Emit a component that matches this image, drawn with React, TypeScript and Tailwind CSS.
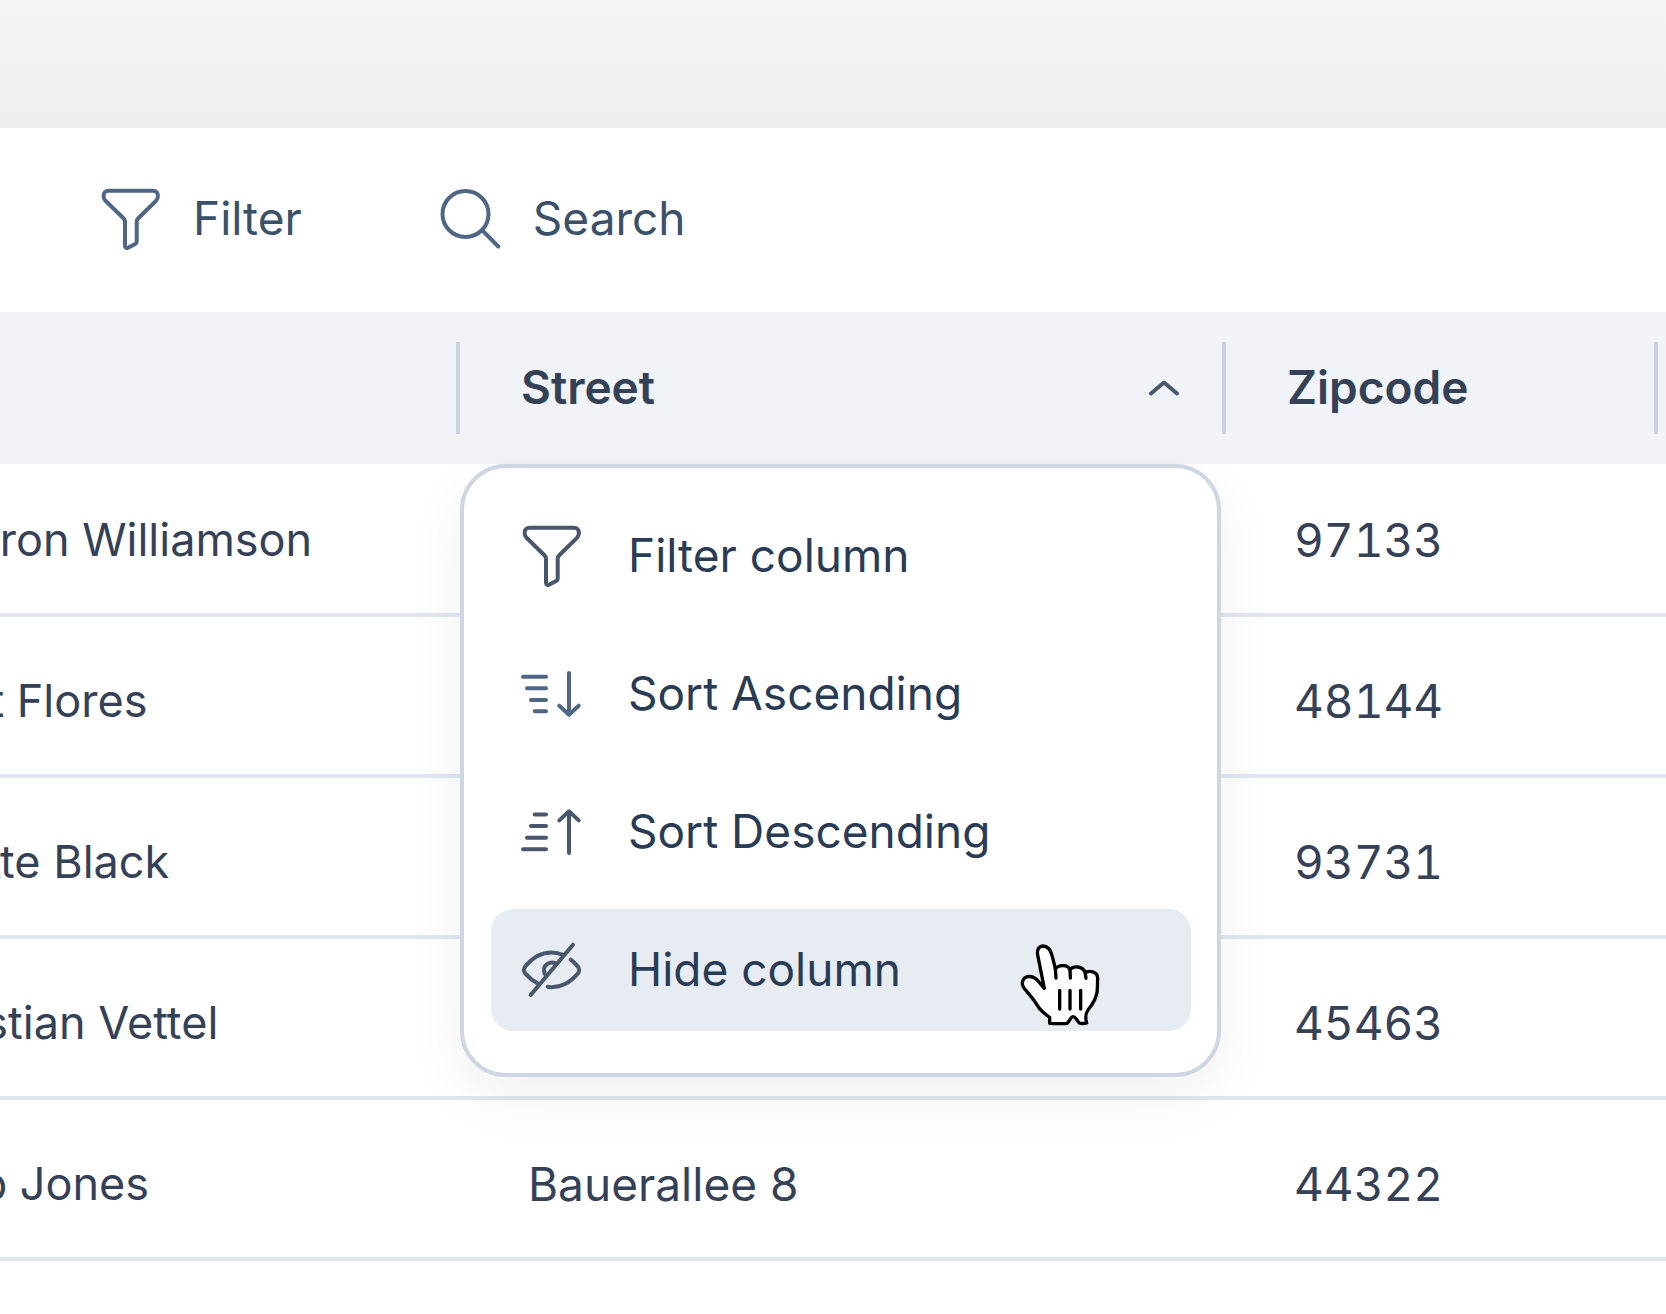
import type { ReactNode } from "react";

type IconProps = { className?: string };

function Icon({ className = "", children }: { className?: string; children: ReactNode }) {
  return (
    <svg
      aria-hidden="true"
      viewBox="0 0 64 64"
      fill="none"
      stroke="currentColor"
      strokeWidth="4"
      strokeLinecap="round"
      strokeLinejoin="round"
      className={`size-16 shrink-0 ${className}`}
    >
      {children}
    </svg>
  );
}

function FunnelIcon({ className }: IconProps) {
  return (
    <Icon className={className}>
      <path d="M9.5 3.7H54C57 3.7 58.9 6 58.9 8.7C58.9 10.8 58.4 12.4 57 13.8L39.5 31C38.2 32.2 37.7 33 37.7 34.6V54.4C37.7 55.8 37.3 56.4 36.2 57L29 60.7C27.3 61.5 26 60.8 26 59.1V34.6C26 33 25.5 32.2 24.2 31L6.5 13.8C5 12.4 4.6 10.8 4.6 8.7C4.6 6 6.6 3.7 9.5 3.7Z" />
    </Icon>
  );
}

function SearchIcon({ className }: IconProps) {
  return (
    <Icon className={className}>
      <circle cx="26.5" cy="27" r="23" />
      <path d="M43.5 43.5L59.3 59.5" />
    </Icon>
  );
}

function SortAscendingIcon({ className }: IconProps) {
  return (
    <Icon className={className}>
      <path d="M3 14.7H26M7 26.3H26M11 38H26M14.7 49.3H26M49 11V52.5M39.3 43.7L49 52.7L58.7 43.7" />
    </Icon>
  );
}

function SortDescendingIcon({ className }: IconProps) {
  return (
    <Icon className={className}>
      <path d="M14.7 14.5H26M11 26H26M7 37.7H26M3 49.3H26M49 53V11.5M39.3 20.4L49 11.3L58.7 20.4" />
    </Icon>
  );
}

function EyeOffIcon({ className }: IconProps) {
  return (
    <Icon className={className}>
      <path d="M43.3 17C39.5 15.3 35.5 14.5 31.3 14.5C20.8 14.5 11.8 20.6 5.4 28.2C3.6 30.4 3.6 33.4 5.4 35.6C9 39.8 13.4 43.2 18.3 45.7" />
      <path d="M50.7 21.7C53.2 23.6 55.6 25.9 57.7 28.4C59.6 30.6 59.6 33.6 57.7 35.8C51.3 43.4 42.5 49.2 31.5 49.2C30.2 49.2 28.9 49 27.7 48.7" />
      <path d="M10.7 57L53 6.7" />
      <path d="M36.3 25.6C29.5 22.6 23.6 27 24 32.5C24.1 34.8 24.8 36.6 26 38" />
    </Icon>
  );
}

function ChevronUpIcon() {
  return (
    <svg
      aria-hidden="true"
      viewBox="0 0 32 18"
      fill="none"
      stroke="currentColor"
      strokeWidth="4"
      strokeLinecap="round"
      strokeLinejoin="round"
      className="h-[18px] w-8"
    >
      <path d="M3 14.5L16 3.5L29 14.5" />
    </svg>
  );
}

function HandCursor() {
  return (
    <svg
      aria-hidden="true"
      viewBox="114 126 252 252"
      fill="none"
      stroke="#000"
      strokeWidth="10"
      strokeLinecap="round"
      strokeLinejoin="round"
      className="pointer-events-none absolute top-[33px] right-[89px] size-[84px]"
    >
      <path
        fill="#fff"
        d="M193 265L174 170C169 150 176 138 190 138C205 139 213 152 217 170C221 185 224 196 226 207C233 196 263 190 270 210C278 197 309 196 316 219C325 211 353 212 353 235C352 252 353 266 351 277C347 299 339 311 326 327C318 338 316 344 318 360L320 369C312 371 304 371 298 369C290 362 288 350 279 350C271 350 270 363 261 370C245 372 225 371 209 370L209 352C190 338 182 333 172 316C158 292 146 282 132 264C122 250 128 233 143 230C168 226 178 250 193 265Z"
      />
      <path d="M226 205L228 234M270 208L271 234M315 215L318 235M239 271V327M270 271V327M302 271V327" />
    </svg>
  );
}

const rows = [
  { name: "Cameron Williamson", street: "", zip: "97133" },
  { name: "Albert Flores", street: "", zip: "48144" },
  { name: "Annette Black", street: "", zip: "93731" },
  { name: "Sebastian Vettel", street: "", zip: "45463" },
  { name: "Jacob Jones", street: "Bauerallee 8", zip: "44322" },
];

const itemClass =
  "relative flex h-[122px] w-full items-center gap-11 rounded-[22px] pl-[29px] text-left text-[#2a3c55]";

function ColumnMenu() {
  return (
    <div
      role="menu"
      aria-label="Street column"
      className="absolute top-full right-px left-1 z-10 flex flex-col gap-4 rounded-[46px] border-4 border-[#cdd6e1] bg-white pt-[27px] pr-[26px] pb-[42px] pl-[27px] font-normal shadow-[0_20px_60px_rgba(0,0,0,0.06)]"
    >
      <button type="button" role="menuitem" className={itemClass}>
        <FunnelIcon className="text-[#4a566b]" />
        <span className="pb-[2px]">Filter column</span>
      </button>
      <button type="button" role="menuitem" className={itemClass}>
        <SortAscendingIcon className="text-[#4f6784]" />
        <span className="pb-[2px]">Sort Ascending</span>
      </button>
      <button type="button" role="menuitem" className={itemClass}>
        <SortDescendingIcon className="text-[#4a566b]" />
        <span className="pb-[2px]">Sort Descending</span>
      </button>
      <button type="button" role="menuitem" className={`${itemClass} bg-[#e7ecf3]`}>
        <EyeOffIcon className="text-[#4a566b]" />
        <span className="pb-[2px]">Hide column</span>
        <HandCursor />
      </button>
    </div>
  );
}

export default function App() {
  return (
    <div className="flex min-h-screen flex-col overflow-hidden bg-white font-['Inter',sans-serif] text-[46px] leading-[56px] text-[#354157]">
      <header className="h-32 bg-linear-to-b from-[#f3f4f8] to-[#eeeff3]" />
      <div className="flex h-[184px] items-center gap-[137px] pb-[2px] pl-[99px] text-[#3b5069]">
        <button type="button" className="flex items-center gap-[30px]">
          <FunnelIcon className="text-[#4f6784]" />
          <span className="pb-[2px]">Filter</span>
        </button>
        <button type="button" className="flex items-center gap-[30px]">
          <SearchIcon className="text-[#4f6784]" />
          <span className="pb-[2px]">Search</span>
        </button>
      </div>
      <div className="-ml-[160px]">
        <table className="w-full table-fixed border-separate border-spacing-0 text-left">
          <colgroup>
            <col className="w-[616px]" />
            <col className="w-[766px]" />
            <col className="w-[432px]" />
            <col />
          </colgroup>
          <thead className="bg-[#f0f4f9]">
            <tr className="h-[152px]">
              <td />
              <th scope="col" className="relative font-semibold">
                <div className="flex h-[92px] items-center justify-between border-l-4 border-[#cbd5e1] pr-[42px] pl-[61px]">
                  <span className="pb-[2px]">Street</span>
                  <button type="button" aria-label="Street column options" aria-expanded="true" className="text-[#4a566b]">
                    <ChevronUpIcon />
                  </button>
                </div>
                <ColumnMenu />
              </th>
              <th scope="col" className="font-semibold">
                <div className="flex h-[92px] items-center border-l-4 border-[#cbd5e1] pl-[61px]">
                  <span className="pb-[2px]">Zipcode</span>
                </div>
              </th>
              <td>
                <div className="h-[92px] border-l-4 border-[#cbd5e1]" />
              </td>
            </tr>
          </thead>
          <tbody className="[&_td]:border-b-4 [&_td]:border-[#e1e7f1] [&_td]:pb-[45px] [&_td]:align-bottom [&_td]:whitespace-nowrap">
            {rows.map((row, i) => (
              <tr key={row.name} className={i === 0 ? "h-[153px]" : "h-[161px]"}>
                <td className="pl-[36px] text-[45px]">{row.name}</td>
                <td className="pl-[72px]">{row.street}</td>
                <td className="pl-[72px] tabular-nums">{row.zip}</td>
                <td />
              </tr>
            ))}
          </tbody>
        </table>
      </div>
    </div>
  );
}
